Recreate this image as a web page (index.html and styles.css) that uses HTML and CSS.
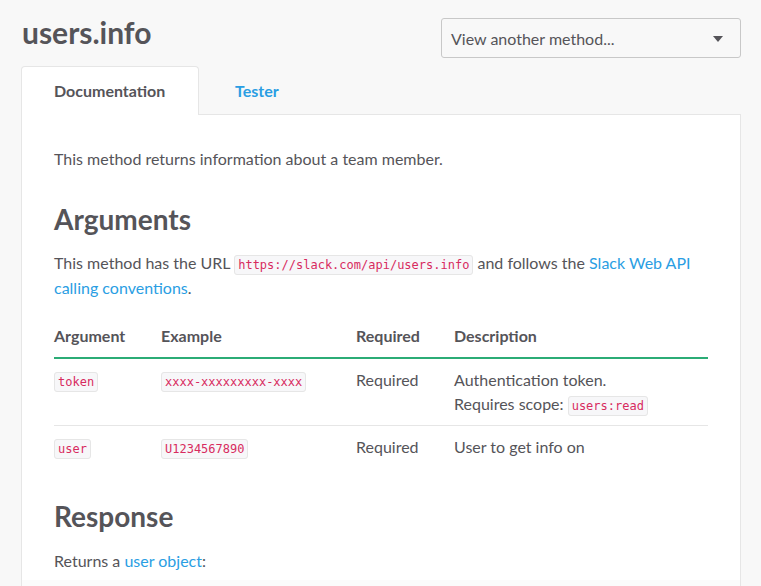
FILE: index.html
```html
<!DOCTYPE html>
<html>
<head>
<meta charset="utf-8">
<link rel="stylesheet" href="styles.css">
</head>
<body>
<div class="page">
  <header class="top">
    <h1 class="title">users.info</h1>
    <div class="select">
      <span>View another method...</span>
      <span class="caret"></span>
    </div>
  </header>
  <nav class="tabs">
    <div class="tab active">Documentation</div>
    <div class="tab link">Tester</div>
  </nav>
  <section class="panel">
    <p class="text">This method returns information about a team member.</p>
    <h2 class="heading">Arguments</h2>
    <p class="text">This method has the URL <code>https://slack.com/api/users.info</code> and follows the <a href="#">Slack Web API calling conventions</a>.</p>
    <table class="args">
      <thead>
        <tr><th class="c1">Argument</th><th class="c2">Example</th><th class="c3">Required</th><th>Description</th></tr>
      </thead>
      <tbody>
        <tr><td><code>token</code></td><td><code>xxxx-xxxxxxxxx-xxxx</code></td><td>Required</td><td>Authentication token.<br>Requires scope: <code>users:read</code></td></tr>
        <tr><td><code>user</code></td><td><code>U1234567890</code></td><td>Required</td><td>User to get info on</td></tr>
      </tbody>
    </table>
    <h2 class="heading resp">Response</h2>
    <p class="text">Returns a <a href="#">user object</a>:</p>
    <div class="codeblock"></div>
  </section>
</div>
</body>
</html>
```
FILE: styles.css
```css
html, body {
  margin: 0;
  padding: 0;
  background: #f8f8f8;
}
body {
  font-family: Lato, "Open Sans", sans-serif;
  color: #555459;
  height: 586px;
  overflow: hidden;
}
.page {
  padding: 18px 20px 0 21px;
}
.top {
  display: flex;
  justify-content: space-between;
  align-items: flex-start;
  height: 40px;
}
.title {
  margin: 0;
  font-size: 30px;
  font-weight: 700;
  line-height: 28px;
  padding-left: 1px;
}
.select {
  box-sizing: border-box;
  width: 300px;
  height: 40px;
  border: 1px solid #c8c8c8;
  border-radius: 3px;
  background: #f8f8f8;
  display: flex;
  align-items: center;
  justify-content: space-between;
  padding: 0 17px 0 9px;
  font-size: 16px;
  color: #555459;
}
.caret {
  width: 0;
  height: 0;
  border-left: 5px solid transparent;
  border-right: 5px solid transparent;
  border-top: 6px solid #555459;
  margin-top: 1px;
}
.tabs {
  display: flex;
  margin-top: 8px;
  position: relative;
  z-index: 1;
}
.tab {
  box-sizing: border-box;
  height: 49px;
  font-size: 16px;
  font-weight: 700;
  display: flex;
  align-items: center;
  padding-bottom: 1px;
}
.tab.active {
  width: 178px;
  padding-left: 32px;
  background: #fff;
  border: 1px solid #e6e6e6;
  border-bottom: none;
  border-radius: 4px 4px 0 0;
  color: #555459;
}
.tab.link {
  padding-left: 36px;
  color: #2a9ee3;
}
.panel {
  margin-top: -1px;
  background: #fff;
  border: 1px solid #e6e6e6;
  border-bottom: none;
  padding: 31px 32px 0 32px;
  height: 600px;
}
.text {
  margin: 0;
  font-size: 16px;
  line-height: 25px;
}
a {
  color: #2a9ee3;
  text-decoration: none;
}
.heading {
  margin: 31px 0 14px;
  font-size: 28px;
  font-weight: 700;
  line-height: 34px;
}
code {
  font-family: "DejaVu Sans Mono", monospace;
  font-size: 12px;
  line-height: 1;
  color: #d72b5f;
  background: #f7f7f9;
  border: 1px solid #e6e6e6;
  border-radius: 3px;
  padding: 2px 3px;
}
.args {
  width: 100%;
  border-collapse: collapse;
  margin-top: 23px;
  font-size: 16px;
}
.args th {
  text-align: left;
  font-weight: 700;
  padding: 0 0 9px;
  border-bottom: 2px solid #2bac76;
  line-height: 25px;
}
.args .c1 { width: 107px; }
.args .c2 { width: 195px; }
.args .c3 { width: 98px; }
.args td {
  vertical-align: top;
  padding: 9px 0 9px;
  line-height: 24px;
  border-bottom: 1px solid #e6e6e6;
}
.args tbody tr:last-child td {
  border-bottom: none;
}
.resp {
  margin-top: 31px;
  margin-bottom: 15px;
}
.codeblock {
  margin: 7px -32px 0;
  height: 40px;
  background: #fbfbfb;
}
```
